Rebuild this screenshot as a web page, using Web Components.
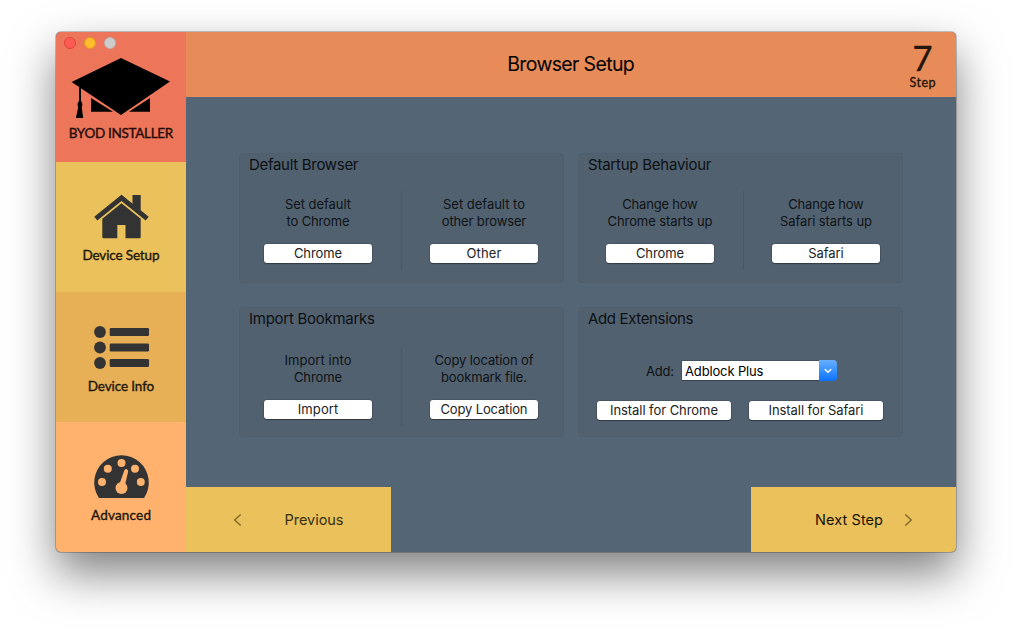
<!DOCTYPE html>
<html lang="en">
<head>
<meta charset="utf-8">
<title>BYOD Installer</title>
<style>
body { margin: 0; width: 1012px; height: 632px; overflow: hidden; background: #fff; font-family: Inter, "Liberation Sans", sans-serif; color: #0c1013; }
</style>
</head>
<body>
<installer-window></installer-window>
<script>
const define = (name, html, ready) => {
  const tpl = document.createElement('template');
  tpl.innerHTML = html;
  customElements.define(name, class extends HTMLElement {
    constructor() {
      super();
      this.attachShadow({ mode: 'open' }).append(tpl.content.cloneNode(true));
    }
    connectedCallback() { if (ready) ready(this, this.shadowRoot); }
  });
};

/* One line of text, tracked so that it occupies the width given in "w". */
define('tracked-text', `
<style>
:host { display: block; white-space: nowrap; width: max-content; }
span { display: inline-block; }
</style><span><slot></slot></span>`, (el, root) => {
  const span = root.querySelector('span');
  const n = el.textContent.length;
  const s = (el.getAttribute('w') - span.getBoundingClientRect().width) / (n - 1);
  span.style.letterSpacing = s.toFixed(3) + 'px';
  span.style.marginRight = (-s).toFixed(3) + 'px';
});

define('push-button', `
<style>
:host { display: block; height: 19px; }
button { all: unset; box-sizing: border-box; width: 100%; height: 19px; display: flex; align-items: center; justify-content: center; background: #fff; border-radius: 3px; box-shadow: 0 0 0 .5px rgba(0,0,0,.25), 0 1px 1px rgba(0,0,0,.3); font-size: 13px; line-height: 19px; color: #222; }
</style><button><slot></slot></button>`);

define('group-box', `
<style>
:host { display: block; box-sizing: border-box; height: 130px; background: #526170; border: 1px solid #4f5e6d; border-radius: 4px; }
header { height: 23px; padding-left: 9px; display: flex; align-items: flex-start; font-size: 15px; line-height: 21px; }
</style><header><slot name="title"></slot></header><slot></slot>`);

define('action-pair', `
<style>
:host { display: flex; justify-content: flex-start; margin-top: var(--top, 14px); padding-left: var(--left, 24px); }
i { width: 1px; height: 79px; background: #4a5866; margin: 0 28px 0 29px; }
</style><slot name="a"></slot><i></i><slot name="b"></slot>`);

define('action-item', `
<style>
:host { display: flex; flex-direction: column; align-items: center; width: 108px; padding-top: 5px; font-size: 13px; line-height: 17px; color: #0e1316; }
push-button { width: 108px; margin-top: 14px; }
</style><slot></slot><push-button><slot name="label"></slot></push-button>`);

define('combo-box', `
<style>
:host { display: flex; width: 155px; height: 21px; align-items: center; color: #000; font-size: 13px; }
.field { width: 137px; height: 19px; box-sizing: border-box; padding: 1px 0 0 3px; display: flex; align-items: center; line-height: 19px; background: #fff; box-shadow: 0 0 0 .5px rgba(0,0,0,.3), 0 1px 0 rgba(0,0,0,.2); }
.arrow { width: 18px; height: 21px; border-radius: 0 4px 4px 0; background: linear-gradient(#68b0fc, #0a73ff); display: flex; align-items: center; justify-content: center; }
svg { display: block; }
</style><div class="field"><slot></slot></div>
<div class="arrow"><svg width="8" height="6" viewBox="0 0 8 6"><path d="M1.2 1.5 4 4.2 6.8 1.5" fill="none" stroke="#fff" stroke-width="1.5" stroke-linecap="round" stroke-linejoin="round"/></svg></div>`);

define('extension-picker', `
<style>
:host { display: block; font-size: 13px; line-height: 19px; }
.row { display: flex; align-items: center; margin: 29px 0 20px 67px; gap: 8px; }
.label { padding-top: 2px; }
.buttons { display: flex; gap: 18px; padding-left: 18px; }
push-button { width: 134px; }
</style>
<div class="row"><tracked-text class="label" w="28">Add:</tracked-text><combo-box><tracked-text w="78.5">Adblock Plus</tracked-text></combo-box></div>
<div class="buttons"><push-button><tracked-text w="108">Install for Chrome</tracked-text></push-button><push-button><tracked-text w="95">Install for Safari</tracked-text></push-button></div>`);

define('side-tile', `
<style>
:host { display: flex; flex-direction: column; align-items: center; height: 130px; box-sizing: border-box; background: var(--tile); font-family: Lato, sans-serif; font-size: 13.5px; line-height: 18px; color: #1b160c; -webkit-text-stroke: .35px currentColor; }
.icon { height: var(--icon-end, 84px); padding-left: var(--nudge, 2px); display: flex; align-items: flex-end; }
::slotted(svg) { overflow: visible; }
</style><div class="icon"><slot name="icon"></slot></div><slot></slot>`);

define('traffic-lights', `
<style>
:host { display: flex; gap: 8px; }
i { box-sizing: border-box; width: 12px; height: 12px; border-radius: 50%; border: 1px solid #e2423b; background: #ff5b54; }
i:nth-of-type(2) { background: #ffbd2e; border-color: #e09b1e; }
i:nth-of-type(3) { background: #cecdcd; border-color: #b9b3b1; }
</style><i></i><i></i><i></i>`);

define('side-bar', `
<style>
:host { display: block; width: 130px; }
.top { position: relative; }
traffic-lights { position: absolute; left: 8px; top: 5px; }
svg { display: block; }
</style>
<div class="top">
<side-tile style="--tile:#ec755a;--icon-end:87px;--nudge:0;color:#210b06"><svg slot="icon" width="100" height="61" viewBox="71 58 100 61"><path d="M71.6 82 121 58l49 23.6L121 115ZM91 98l22 13.7H91ZM150 98v13.7h-21Z"/><path d="M79 86h2v15q2.3 3 .7 6L83.2 118h-7.3l2.3-11q-1.7-3 .8-6Z"/></svg><tracked-text w="104.5" style="margin-top:5px">BYOD INSTALLER</tracked-text></side-tile>
<traffic-lights></traffic-lights>
</div>
<side-tile style="--tile:#eac15a;--icon-end:77px"><svg slot="icon" width="56" height="44" viewBox="94 195 56 44" fill="#333"><path d="M95.8 218.6 121.5 197.8l25.7 20.8" fill="none" stroke="#333" stroke-width="4.8"/><path d="M119 197.6q2.5-4 5 0ZM132.5 195h8.2v16l-8.2-7ZM121.5 203.2l19.2 15.6V237q0 1.2-1.2 1.2h-14V225h-8.2v13.2h-13.8q-1.2 0-1.2-1.2v-18.2Z"/></svg><tracked-text w="77" style="margin-top:7px">Device Setup</tracked-text></side-tile>
<side-tile style="--tile:#e7b057;--icon-end:78px"><svg slot="icon" width="56" height="44" viewBox="94 326 56 44" fill="#333"><circle cx="100" cy="332" r="5.9"/><circle cx="100" cy="347.5" r="5.9"/><circle cx="100" cy="363" r="5.9"/><rect x="109.7" y="328" width="39.3" height="8" rx="1.3"/><rect x="109.7" y="343.5" width="39.3" height="8" rx="1.3"/><rect x="109.7" y="359" width="39.3" height="8" rx="1.3"/></svg><tracked-text w="66.5" style="margin-top:7px">Device Info</tracked-text></side-tile>
<side-tile style="--tile:#ffb26d;--icon-end:77px"><svg slot="icon" width="56" height="44" viewBox="94 455 56 44"><path fill="#333" d="M98.8 497.7A27.3 27.3 0 1 1 144.2 497.7Q143.8 498 143 498H100Q99.2 498 98.8 497.7Z"/><g fill="#ffb26d"><circle cx="102" cy="482" r="4"/><circle cx="107.8" cy="468.8" r="4"/><circle cx="121.5" cy="463" r="4"/><circle cx="135" cy="468.8" r="4"/><circle cx="140.8" cy="482" r="4"/><circle cx="121.5" cy="488" r="6"/><path d="M119.5 484 124.3 470.5q.8-1.7 2.5-1.3 1.6.7 1.3 2.5L125 485Z"/></g></svg><tracked-text w="60" style="margin-top:7px">Advanced</tracked-text></side-tile>`);

define('title-bar', `
<style>
:host { display: grid; grid-template-columns: 1fr auto 1fr; height: 65px; background: #e78b59; }
h1 { margin: 0; font-size: 19.5px; font-weight: 400; line-height: 65px; color: #000; grid-column: 2; }
.step { justify-self: end; width: 67px; display: flex; flex-direction: column; align-items: center; font-family: Lato, sans-serif; color: #24150d; font-size: 12.5px; line-height: 14px; -webkit-text-stroke: .35px currentColor; }
b { font-weight: 400; font-size: 34.5px; line-height: 34px; margin: 9px 0 1px; }
</style><h1><tracked-text w="127.5">Browser Setup</tracked-text></h1><div class="step"><b>7</b><tracked-text w="26">Step</tracked-text></div>`);

define('nav-bar', `
<style>
:host { display: flex; justify-content: space-between; height: 65px; font-size: 14.5px; line-height: 20px; }
div { width: 205px; height: 65px; box-sizing: border-box; background: #eac15a; display: flex; align-items: center; color: #15120a; }
.prev { padding-left: 47px; gap: 42.5px; color: #353017; }
.next { padding-left: 64px; gap: 20.5px; }
svg { display: block; fill: none; stroke: #7c682f; stroke-width: 1.4; }
</style>
<div class="prev"><svg width="9" height="14" viewBox="0 0 9 14"><path d="M7.7 1.5 1.7 7l6 5.5"/></svg><tracked-text w="59">Previous</tracked-text></div>
<div class="next"><tracked-text w="68">Next Step</tracked-text><svg width="9" height="14" viewBox="0 0 9 14"><path d="M1.3 1.5 7.3 7l-6 5.5"/></svg></div>`);

define('setup-grid', `
<style>
:host { display: grid; grid-template-columns: 325px 325px; grid-auto-rows: 130px; gap: 24px 14px; padding: 56px 53px 0; box-sizing: border-box; height: 390px; }
.right { --left: 27px; }
.low { --top: 16px; }
</style>
<group-box><tracked-text slot="title" w="109.5">Default Browser</tracked-text>
<action-pair>
<action-item slot="a"><tracked-text w="66">Set default</tracked-text><tracked-text w="63">to Chrome</tracked-text><tracked-text slot="label" w="48">Chrome</tracked-text></action-item>
<action-item slot="b"><tracked-text w="82">Set default to</tracked-text><tracked-text w="84.5">other browser</tracked-text><tracked-text slot="label" w="35">Other</tracked-text></action-item>
</action-pair></group-box>
<group-box class="right"><tracked-text slot="title" w="123.5">Startup Behaviour</tracked-text>
<action-pair>
<action-item slot="a"><tracked-text w="75.5">Change how</tracked-text><tracked-text w="105">Chrome starts up</tracked-text><tracked-text slot="label" w="48">Chrome</tracked-text></action-item>
<action-item slot="b"><tracked-text w="75.5">Change how</tracked-text><tracked-text w="92">Safari starts up</tracked-text><tracked-text slot="label" w="35.5">Safari</tracked-text></action-item>
</action-pair></group-box>
<group-box class="low"><tracked-text slot="title" w="126">Import Bookmarks</tracked-text>
<action-pair>
<action-item slot="a"><tracked-text w="67">Import into</tracked-text><tracked-text w="48">Chrome</tracked-text><tracked-text slot="label" w="40.5">Import</tracked-text></action-item>
<action-item slot="b"><tracked-text w="99">Copy location of</tracked-text><tracked-text w="86">bookmark file.</tracked-text><tracked-text slot="label" w="87">Copy Location</tracked-text></action-item>
</action-pair></group-box>
<group-box><tracked-text slot="title" w="105.5">Add Extensions</tracked-text><extension-picker></extension-picker></group-box>`);

define('installer-window', `
<style>
:host { display: block; padding: 32px 56px 0; }
.frame { display: flex; width: 900px; height: 520px; border-radius: 5px; background: #546576; box-shadow: 0 0 0 1px rgba(0,0,0,.22), 0 21px 46px rgba(0,0,0,.5); }
.clip { display: flex; width: 900px; height: 520px; border-radius: 5px; overflow: hidden; }
main { flex: 1; }
</style>
<div class="frame"><div class="clip"><side-bar></side-bar><main><title-bar></title-bar><setup-grid></setup-grid><nav-bar></nav-bar></main></div></div>`);
</script>
</body>
</html>
